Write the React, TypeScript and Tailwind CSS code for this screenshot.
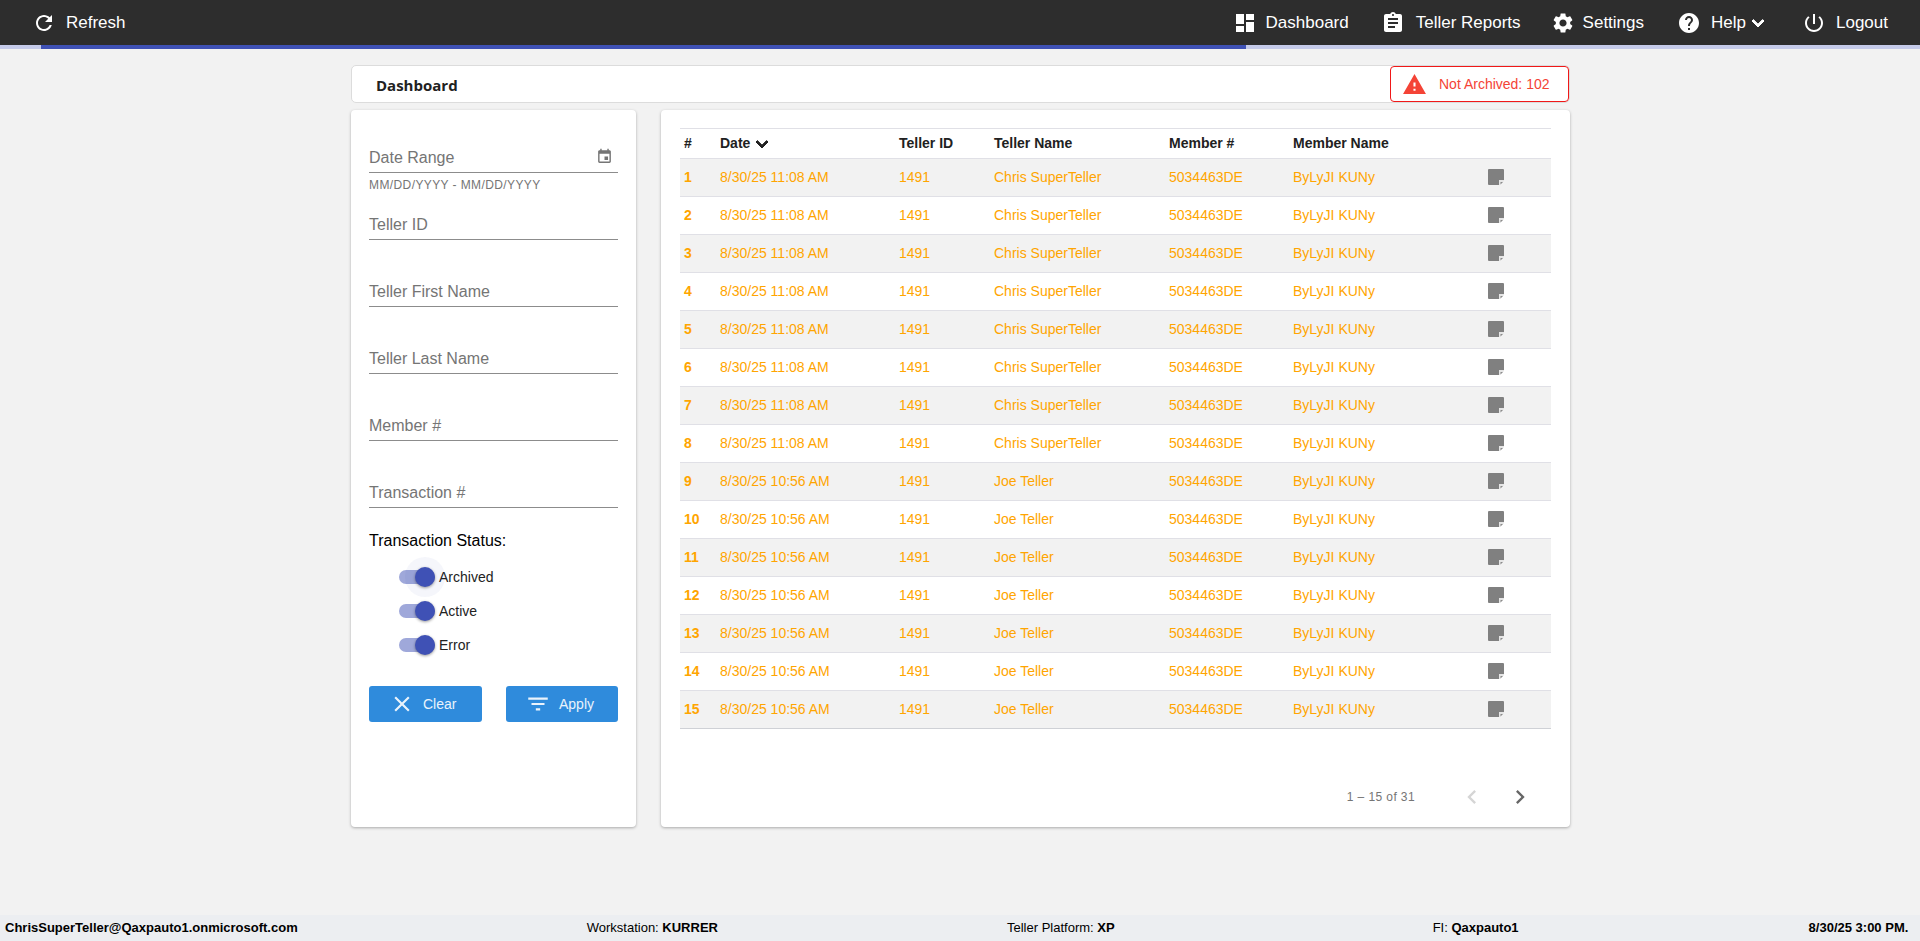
import React from 'react';

const icons = {
  refresh: 'M17.65 6.35C16.2 4.9 14.21 4 12 4c-4.42 0-7.99 3.58-7.99 8s3.57 8 7.99 8c3.73 0 6.84-2.55 7.73-6h-2.08c-.82 2.33-3.04 4-5.65 4-3.31 0-6-2.69-6-6s2.69-6 6-6c1.66 0 3.14.69 4.22 1.78L13 11h7V4l-2.35 2.35z',
  dashboard: 'M3 13h8V3H3v10zm0 8h8v-6H3v6zm10 0h8V11h-8v10zm0-18v6h8V3h-8z',
  assignment: 'M19 3h-4.18C14.4 1.84 13.3 1 12 1c-1.3 0-2.4.84-2.82 2H5c-1.1 0-2 .9-2 2v14c0 1.1.9 2 2 2h14c1.1 0 2-.9 2-2V5c0-1.1-.9-2-2-2zm-7 0c.55 0 1 .45 1 1s-.45 1-1 1-1-.45-1-1 .45-1 1-1zm2 14H7v-2h7v2zm3-4H7v-2h10v2zm0-4H7V7h10v2z',
  settings: 'M19.14 12.94c.04-.3.06-.61.06-.94 0-.32-.02-.64-.07-.94l2.03-1.58c.18-.14.23-.41.12-.61l-1.92-3.32c-.12-.22-.37-.29-.59-.22l-2.39.96c-.5-.38-1.03-.7-1.62-.94l-.36-2.54c-.04-.24-.24-.41-.48-.41h-3.84c-.24 0-.43.17-.47.41l-.36 2.54c-.59.24-1.13.57-1.62.94l-2.39-.96c-.22-.08-.47 0-.59.22L2.74 8.87c-.12.21-.08.47.12.61l2.03 1.58c-.05.3-.09.63-.09.94s.02.64.07.94l-2.03 1.58c-.18.14-.23.41-.12.61l1.92 3.32c.12.22.37.29.59.22l2.39-.96c.5.38 1.03.7 1.62.94l.36 2.54c.05.24.24.41.48.41h3.84c.24 0 .44-.17.47-.41l.36-2.54c.59-.24 1.13-.56 1.62-.94l2.39.96c.22.08.47 0 .59-.22l1.92-3.32c.12-.22.07-.47-.12-.61l-2.01-1.58zM12 15.6c-1.98 0-3.6-1.62-3.6-3.6s1.62-3.6 3.6-3.6 3.6 1.62 3.6 3.6-1.62 3.6-3.6 3.6z',
  help: 'M12 2C6.48 2 2 6.48 2 12s4.48 10 10 10 10-4.48 10-10S17.52 2 12 2zm1 17h-2v-2h2v2zm2.07-7.75l-.9.92C13.45 12.9 13 13.5 13 15h-2v-.5c0-1.1.45-2.1 1.17-2.83l1.24-1.26c.37-.36.59-.86.59-1.41 0-1.1-.9-2-2-2s-2 .9-2 2H8c0-2.21 1.79-4 4-4s4 1.79 4 4c0 .88-.36 1.68-.93 2.25z',
  power: 'M13 3h-2v10h2V3zm4.83 2.17l-1.42 1.42C17.99 7.86 19 9.81 19 12c0 3.87-3.13 7-7 7s-7-3.13-7-7c0-2.19 1.01-4.14 2.58-5.42L6.17 5.17C4.23 6.82 3 9.26 3 12c0 4.97 4.03 9 9 9s9-4.03 9-9c0-2.74-1.23-5.18-3.17-6.83z',
  warning: 'M1 21h22L12 2 1 21zm12-3h-2v-2h2v2zm0-4h-2v-4h2v4z',
  calendar: 'M17 12h-5v5h5v-5zM16 1v2H8V1H6v2H5c-1.11 0-1.99.9-1.99 2L3 19c0 1.1.89 2 2 2h14c1.1 0 2-.9 2-2V5c0-1.1-.9-2-2-2h-1V1h-2zm3 18H5V8h14v11z',
  down: 'M7.41 8.59L12 13.17l4.59-4.58L18 10l-6 6-6-6 1.41-1.41z',
  close: 'M19 6.41L17.59 5 12 10.59 6.41 5 5 6.41 10.59 12 5 17.59 6.41 19 12 13.41 17.59 19 19 17.59 13.41 12z',
  filter: 'M10 18h4v-2h-4v2zM3 6v2h18V6H3zm3 7h12v-2H6v2z',
  left: 'M15.41 7.41L14 6l-6 6 6 6 1.41-1.41L10.83 12z',
  right: 'M10 6L8.59 7.41 13.17 12l-4.58 4.59L10 18l6-6z',
};

function Icon({ d, className }: { d: string; className: string }) {
  return (
    <svg viewBox="0 0 24 24" fill="currentColor" className={className}>
      <path d={d} />
    </svg>
  );
}

function NoteIcon() {
  return (
    <svg viewBox="0 0 16 16" className="block w-4 h-4 mb-[2px]">
      <path d="M1 0h14a1 1 0 0 1 1 1v10h-5v5H1a1 1 0 0 1-1-1V1a1 1 0 0 1 1-1z" fill="#808080" />
      <path d="M11 11h5v1l-4 4h-1z" fill="#e6e6e6" />
      <path d="M12.5 13H15l-2.5 2.5z" fill="#8a8a8a" />
    </svg>
  );
}

function NavItem({ icon, label, className, iconGap }: { icon: string; label: string; className: string; iconGap: string }) {
  return (
    <div className={'flex items-center ' + className}>
      <Icon d={icon} className="w-6 h-6" />
      <span className={iconGap + ' text-[17px]'}>{label}</span>
    </div>
  );
}

function Field({ label }: { label: string }) {
  return (
    <div className="h-[28px] mt-[39px] border-b border-[#8c8c8c] text-[#757575] text-[16px] leading-[26px]">{label}</div>
  );
}

function Toggle({ label, halo }: { label: string; halo?: boolean }) {
  return (
    <div className="flex items-center h-[34px] pl-[30px]">
      <div className="relative w-[36px] h-[14px] rounded-full bg-[#9fa8da]">
        {halo && <div className="absolute left-[6px] top-[-13px] w-[40px] h-[40px] rounded-full bg-[#3f51b5]/5" />}
        <div className="absolute left-[16px] top-[-3px] w-[20px] h-[20px] rounded-full bg-[#3f51b5] shadow-[0_1px_3px_rgba(0,0,0,0.4)]" />
      </div>
      <span className="ml-[4px] text-[14px] text-[#222]">{label}</span>
    </div>
  );
}

const rows = Array.from({ length: 15 }, (_, i) => ({
  id: i + 1,
  date: i < 8 ? '8/30/25 11:08 AM' : '8/30/25 10:56 AM',
  name: i < 8 ? 'Chris SuperTeller' : 'Joe Teller',
}));

export default function App() {
  return (
    <div className="h-[941px] overflow-hidden flex flex-col bg-[#f2f2f2] font-['Liberation_Sans',Arial,sans-serif]">
      <div className="h-[45px] shrink-0 bg-[#2d2d2d] text-white flex items-center">
        <NavItem icon={icons.refresh} label="Refresh" className="ml-[32px]" iconGap="ml-[10px]" />
        <div className="flex-1" />
        <NavItem icon={icons.dashboard} label="Dashboard" className="mr-[32px]" iconGap="ml-[9px]" />
        <NavItem icon={icons.assignment} label="Teller Reports" className="mr-[30px]" iconGap="ml-[11px]" />
        <NavItem icon={icons.settings} label="Settings" className="mr-[33px]" iconGap="ml-[8px]" />
        <div className="flex items-center mr-[32px]">
          <Icon d={icons.help} className="w-6 h-6" />
          <span className="ml-[10px] text-[17px]">Help</span>
          <Icon d={icons.down} className="w-6 h-6 stroke-current stroke-1" />
        </div>
        <NavItem icon={icons.power} label="Logout" className="mr-[32px]" iconGap="ml-[10px]" />
      </div>
      <div className="h-[4px] shrink-0 bg-[#c5cae9]">
        <div className="h-full ml-[41px] w-[1205px] bg-[#3f51b5]" />
      </div>

      <div className="flex-1 w-[1219px] ml-[351px] pt-[16px]">
        <div className="h-[38px] bg-white rounded-[5px] border border-[#dcdcdc] flex items-center justify-between">
          <span className="ml-[24px] pt-[3px] text-[15px] font-bold text-[#212121] font-['Open_Sans',sans-serif]">Dashboard</span>
          <div className="h-[36px] w-[179px] rounded-[4px] border border-[#f01818] flex items-center pl-[11px] text-[#f44336]">
            <Icon d={icons.warning} className="w-[25px] h-[25px]" />
            <span className="ml-[12px] text-[14px]">Not Archived: 102</span>
          </div>
        </div>

        <div className="flex mt-[7px] gap-[25px] h-[717px]">
          <div className="w-[285px] bg-white rounded-[4px] shadow-[0_1px_3px_rgba(0,0,0,0.3)] px-[18px] pt-[34px]">
            <div className="h-[29px] border-b border-[#8c8c8c] text-[#757575] text-[16px] leading-[28px] flex justify-between items-center">
              <span>Date Range</span>
              <Icon d={icons.calendar} className="w-[17px] h-[17px] text-[#757575] mr-[5px] mb-[4px]" />
            </div>
            <div className="text-[12px] tracking-[0.4px] text-[#757575] mt-[4px] leading-[16px] h-[16px]">MM/DD/YYYY - MM/DD/YYYY</div>
            <div className="h-[28px] mt-[19px] border-b border-[#8c8c8c] text-[#757575] text-[16px] leading-[26px]">Teller ID</div>
            <Field label="Teller First Name" />
            <Field label="Teller Last Name" />
            <Field label="Member #" />
            <Field label="Transaction #" />
            <div className="mt-[23px] text-[16px] leading-[20px] text-black">Transaction Status:</div>
            <div className="mt-[9px]">
              <Toggle label="Archived" halo />
              <Toggle label="Active" />
              <Toggle label="Error" />
            </div>
            <div className="flex justify-between mt-[24px]">
              <button className="w-[113px] h-[36px] rounded-[3px] bg-[#2f8bdc] text-white/90 text-[14px] flex items-center pl-[20px]">
                <Icon d={icons.close} className="w-[26px] h-[26px]" />
                <span className="ml-[8px]">Clear</span>
              </button>
              <button className="w-[112px] h-[36px] rounded-[3px] bg-[#2f8bdc] text-white/90 text-[14px] flex items-center pl-[19px]">
                <Icon d={icons.filter} className="w-[26px] h-[26px]" />
                <span className="ml-[8px]">Apply</span>
              </button>
            </div>
          </div>

          <div className="flex-1 bg-white rounded-[4px] shadow-[0_1px_3px_rgba(0,0,0,0.3)] px-[19px] pt-[18px] flex flex-col">
            <table className="w-full table-fixed border-collapse text-[14px] text-left">
              <colgroup>
                <col className="w-[36px]" />
                <col className="w-[179px]" />
                <col className="w-[95px]" />
                <col className="w-[175px]" />
                <col className="w-[124px]" />
                <col className="w-[195px]" />
                <col />
              </colgroup>
              <thead>
                <tr className="h-[30px] border-y border-[#e0e0e6] text-[#212121]">
                  <th className="pl-[4px] font-bold">#</th>
                  <th className="pl-[4px] font-bold">
                    <span className="inline-flex items-center">
                      Date
                      <Icon d={icons.down} className="w-[24px] h-[24px] text-[#212121] stroke-current stroke-1" />
                    </span>
                  </th>
                  <th className="pl-[4px] font-bold">Teller ID</th>
                  <th className="pl-[4px] font-bold">Teller Name</th>
                  <th className="pl-[4px] font-bold">Member #</th>
                  <th className="pl-[4px] font-bold">Member Name</th>
                  <th />
                </tr>
              </thead>
              <tbody>
                {rows.map((r) => (
                  <tr
                    key={r.id}
                    className={
                      'h-[38px] border-b text-[#ffa500] ' +
                      (r.id === 15 ? 'border-[#cfd1d6] ' : 'border-[#e0e0e6] ') +
                      (r.id % 2 === 1 ? 'bg-[#f2f2f2]' : 'bg-white')
                    }
                  >
                    <td className="pl-[4px] font-bold">{r.id}</td>
                    <td className="pl-[4px]">{r.date}</td>
                    <td className="pl-[4px]">1491</td>
                    <td className="pl-[4px]">{r.name}</td>
                    <td className="pl-[4px]">5034463DE</td>
                    <td className="pl-[4px]">ByLyJI KUNy</td>
                    <td className="pl-[4px]">
                      <NoteIcon />
                    </td>
                  </tr>
                ))}
              </tbody>
            </table>
            <div className="flex items-center justify-end mt-[54px] mr-[17px]">
              <span className="text-[12px] tracking-[0.4px] text-[#757575] mr-[43px]">1 – 15 of 31</span>
              <Icon d={icons.left} className="w-[28px] h-[28px] text-[#d5d5d5] mr-[20px]" />
              <Icon d={icons.right} className="w-[28px] h-[28px] text-[#666]" />
            </div>
          </div>
        </div>
      </div>

      <div className="h-[26px] shrink-0 bg-[#eceef1] flex items-center pl-[5px] text-[13px] text-black">
        <b>ChrisSuperTeller@Qaxpauto1.onmicrosoft.com</b>
        <span className="ml-[289px]">Workstation: <b>KURRER</b></span>
        <span className="ml-[289px]">Teller Platform: <b>XP</b></span>
        <span className="ml-[318px]">FI: <b>Qaxpauto1</b></span>
        <b className="ml-[290px]">8/30/25 3:00 PM.</b>
      </div>
    </div>
  );
}
